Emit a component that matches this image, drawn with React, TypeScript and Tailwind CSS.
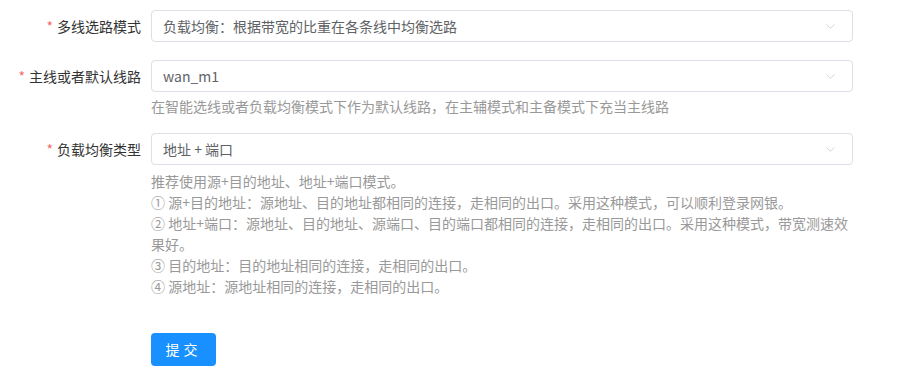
import { ChevronDown } from "lucide-react";

type Row = {
  label: string;
  value: string;
  help?: string[];
};

const rows: Row[] = [
  { label: "多线选路模式", value: "负载均衡：根据带宽的比重在各条线中均衡选路" },
  {
    label: "主线或者默认线路",
    value: "wan_m1",
    help: ["在智能选线或者负载均衡模式下作为默认线路，在主辅模式和主备模式下充当主线路"],
  },
  {
    label: "负载均衡类型",
    value: "地址 + 端口",
    help: [
      "推荐使用源+目的地址、地址+端口模式。",
      "① 源+目的地址：源地址、目的地址都相同的连接，走相同的出口。采用这种模式，可以顺利登录网银。",
      "② 地址+端口：源地址、目的地址、源端口、目的端口都相同的连接，走相同的出口。采用这种模式，带宽测速效果好。",
      "③ 目的地址：目的地址相同的连接，走相同的出口。",
      "④ 源地址：源地址相同的连接，走相同的出口。",
    ],
  },
];

function SelectBox({ value }: { value: string }) {
  return (
    <div className="flex h-[32px] items-center justify-between rounded-[4px] border border-[#dcdfe6] bg-white pl-[11px] pr-[14px]">
      <span className="text-[14px] text-[#606266]">{value}</span>
      <ChevronDown className="h-[15px] w-[15px] text-[#c0c4cc]" strokeWidth={1.2} />
    </div>
  );
}

export default function App() {
  return (
    <div
      className="h-[388px] w-[902px] bg-white pt-[10px]"
      style={{ fontFamily: '"Noto Sans CJK SC", "Liberation Sans", sans-serif' }}
    >
      <div className="flex flex-col">
        {rows.map((row, i) => (
          <div key={row.label} className={i === 0 ? "mb-[18px] flex" : i === 1 ? "mb-[16px] flex" : "flex"}>
            <div className="flex h-[32px] w-[151px] shrink-0 items-center justify-end pr-[10px] text-[14px] text-[#333]">
              <span className="mr-[4px] text-[#f56c6c]">*</span>
              {row.label}
            </div>
            <div className="w-[702px]">
              <SelectBox value={row.value} />
              {row.help && (
                <div
                  className={
                    i === 1
                      ? "mt-[4px] text-[14px] leading-[21px] text-[#999]"
                      : "mt-[6px] text-[14px] leading-[21px] text-[#999]"
                  }
                >
                  {row.help.map((line) => (
                    <p key={line}>{line}</p>
                  ))}
                </div>
              )}
            </div>
          </div>
        ))}
        <div className="mt-[36px] pl-[151px]">
          <button className="h-[33px] w-[65px] rounded-[4px] bg-[#1890ff] text-[14px] tracking-[4px] text-white">
            提交
          </button>
        </div>
      </div>
    </div>
  );
}
